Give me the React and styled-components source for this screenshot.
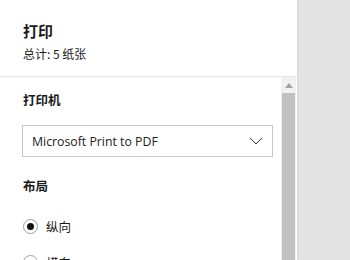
import styled, { createGlobalStyle } from "styled-components";

const GlobalStyle = createGlobalStyle`
  html, body {
    margin: 0;
    padding: 0;
    background: #e4e4e4;
    overflow: hidden;
  }
  body {
    font-family: "Segoe UI", "Open Sans", "Noto Sans CJK SC", sans-serif;
    color: #1b1b1b;
  }
`;

const Screen = styled.div`
  display: flex;
  width: 350px;
  height: 260px;
  background: #e4e4e4;
`;

const Panel = styled.aside`
  width: 297px;
  height: 260px;
  background: #fff;
  display: flex;
  flex-direction: column;
  box-shadow: 1px 0 2px rgba(0, 0, 0, 0.06);
  overflow: hidden;
`;

const Header = styled.header`
  padding: 20px 23px 13px;
  border-bottom: 1px solid #e6e6e6;
  flex-shrink: 0;
`;

const Title = styled.h1`
  margin: 0;
  font-size: 15px;
  line-height: 22px;
  font-weight: 700;
  font-family: "Noto Sans CJK SC", sans-serif;
`;

const Summary = styled.p`
  margin: 3px 0 0;
  font-size: 12px;
  line-height: 18px;
  font-family: "Noto Sans CJK SC", sans-serif;
`;

const Body = styled.div`
  flex: 1;
  display: flex;
  min-height: 0;
`;

const Content = styled.div`
  flex: 1;
  padding: 13px 8px 0 22px;
  display: flex;
  flex-direction: column;
  & > * {
    flex-shrink: 0;
  }
`;

const Label = styled.h2`
  margin: 0 0 0 1px;
  font-size: 12.5px;
  line-height: 20px;
  font-weight: 700;
  font-family: "Noto Sans CJK SC", sans-serif;
`;

const Select = styled.div`
  margin-top: 15px;
  height: 30px;
  border: 1px solid #c8c8c8;
  display: flex;
  align-items: center;
  justify-content: space-between;
  padding: 0 9px 0 9px;
  font-size: 12.3px;
  color: #222;
`;

const Section = styled.div`
  margin-top: ${(p) => p.$gap}px;
`;

const Options = styled.div`
  margin-top: 21px;
  display: flex;
  flex-direction: column;
  gap: 18px;
`;

const RadioRow = styled.label`
  display: flex;
  align-items: center;
  gap: 8px;
  height: 18px;
  font-size: 12.5px;
  font-family: "Noto Sans CJK SC", sans-serif;
`;

const Radio = styled.span`
  width: 13px;
  height: 13px;
  border-radius: 50%;
  border: 1px solid #a0a0a0;
  display: flex;
  align-items: center;
  justify-content: center;
  margin-left: 1px;
  &::after {
    content: "";
    width: 7px;
    height: 7px;
    border-radius: 50%;
    background: ${(p) => (p.$checked ? "#111" : "transparent")};
  }
`;

const Scrollbar = styled.div`
  width: 15px;
  margin-right: 1px;
  background: #f1f1f1;
  display: flex;
  flex-direction: column;
  align-items: center;
`;

const ArrowButton = styled.div`
  height: 16px;
  width: 100%;
  display: flex;
  align-items: center;
  justify-content: center;
`;

const Thumb = styled.div`
  flex: 1;
  width: 13px;
  background: #c1c1c1;
`;

export default function App() {
  return (
    <>
      <GlobalStyle />
      <Screen>
        <Panel>
          <Header>
            <Title>打印</Title>
            <Summary>总计: 5 纸张</Summary>
          </Header>
          <Body>
            <Content>
              <Label>打印机</Label>
              <Select>
                <span>Microsoft Print to PDF</span>
                <svg width="14" height="8" viewBox="0 0 14 8">
                  <path d="M1 1l6 6 6-6" fill="none" stroke="#333" strokeWidth="1" />
                </svg>
              </Select>
              <Section $gap={19}>
                <Label>布局</Label>
                <Options>
                  <RadioRow>
                    <Radio $checked />
                    纵向
                  </RadioRow>
                  <RadioRow>
                    <Radio />
                    横向
                  </RadioRow>
                </Options>
              </Section>
            </Content>
            <Scrollbar>
              <ArrowButton>
                <svg width="8" height="5" viewBox="0 0 8 5">
                  <path d="M0 5L4 0l4 5z" fill="#a3a3a3" />
                </svg>
              </ArrowButton>
              <Thumb />
            </Scrollbar>
          </Body>
        </Panel>
      </Screen>
    </>
  );
}
